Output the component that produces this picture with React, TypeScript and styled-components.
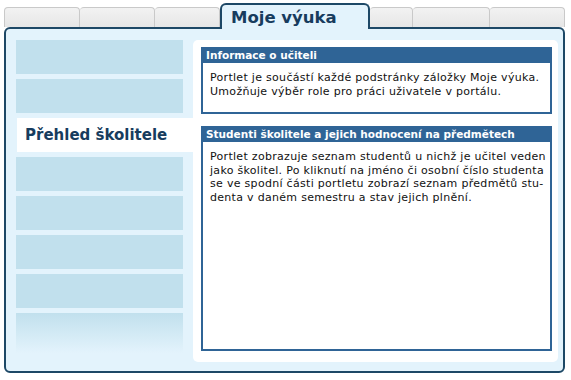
import React from "react";
import styled, { createGlobalStyle } from "styled-components";

const Global = createGlobalStyle`
  html, body { margin: 0; padding: 0; background: #ffffff; }
  body { font-family: "DejaVu Sans", Verdana, sans-serif; }
`;

const Page = styled.div`
  width: 571px;
  height: 380px;
  box-sizing: border-box;
  padding: 3px 6px 0 4px;
  display: flex;
  flex-direction: column;
`;

const TabBar = styled.div`
  display: flex;
  align-items: flex-end;
  height: 24px;
  position: relative;
  z-index: 2;
`;

const Tab = styled.div<{ $w: number }>`
  width: ${(p) => p.$w}px;
  height: 20px;
  box-sizing: border-box;
  background: linear-gradient(#f2f2f2, #e6e6e6);
  border: 1px solid #c9c9c9;
  border-bottom: none;
  border-left-width: 0;
  border-radius: 4px 4px 0 0;
  &:first-child { border-left-width: 1px; }
`;

const ActiveTab = styled.div`
  width: 150px;
  height: 26px;
  margin-bottom: -2px;
  box-sizing: border-box;
  background: #e3f3fc;
  border: 2px solid #1d4866;
  border-bottom: none;
  border-radius: 6px 6px 0 0;
  display: flex;
  align-items: center;
  justify-content: flex-start;
  padding-left: 9px;
  font-weight: bold;
  font-size: 16.5px;
  color: #173c5e;
  padding-top: 1px;
`;

const Panel = styled.div`
  height: 346px;
  box-sizing: border-box;
  border: 2px solid #1d4866;
  border-radius: 6px;
  background: #e3f3fc;
  padding: 11px 10px 9px 10px;
  display: grid;
  grid-template-columns: 177px 1fr;
`;

const Nav = styled.div`
  display: flex;
  flex-direction: column;
  gap: 5px;
`;

const NavItem = styled.div<{ $fade?: boolean }>`
  height: ${(p) => (p.$fade ? 40 : 34)}px;
  margin-right: 10px;
  background: ${(p) =>
    p.$fade ? "linear-gradient(#c1e0ed, #e3f3fc)" : "#c1e0ed"};
`;

const NavActive = styled.div`
  height: 34px;
  margin-left: 1px;
  background: #ffffff;
  display: flex;
  align-items: center;
  padding-left: 8px;
  font-weight: bold;
  font-size: 15px;
  color: #173c5e;
`;

const Content = styled.div`
  background: #ffffff;
  border-radius: 5px;
  padding: 7px 6px 11px 8px;
  display: flex;
  flex-direction: column;
  gap: 12px;
`;

const Portlet = styled.div<{ $grow?: boolean }>`
  display: flex;
  flex-direction: column;
  flex: ${(p) => (p.$grow ? 1 : "none")};
  border: 2px solid #2f6496;
  border-top: none;
`;

const PortletHeader = styled.div`
  background: #2f6496;
  color: #ffffff;
  font-weight: bold;
  font-size: 10.5px;
  height: 16px;
  line-height: 16px;
  margin: 0 -2px;
  padding-left: 5px;
`;

const PortletBody = styled.div`
  flex: 1;
  padding: 8px 4px 14px 7px;
  font-size: 11px;
  letter-spacing: 0.3px;
  line-height: 13.5px;
  color: #111111;
  white-space: nowrap;
`;

export default function App() {
  const leftTabs = [76, 75, 65];
  const rightTabs = [43, 77, 75];
  return (
    <>
      <Global />
      <Page>
        <TabBar>
          {leftTabs.map((w, i) => (
            <Tab key={i} $w={w} />
          ))}
          <ActiveTab>Moje výuka</ActiveTab>
          {rightTabs.map((w, i) => (
            <Tab key={i} $w={w} />
          ))}
        </TabBar>
        <Panel>
          <Nav>
            <NavItem />
            <NavItem />
            <NavActive>Přehled školitele</NavActive>
            <NavItem />
            <NavItem />
            <NavItem />
            <NavItem />
            <NavItem $fade />
          </Nav>
          <Content>
            <Portlet>
              <PortletHeader>Informace o učiteli</PortletHeader>
              <PortletBody>
                Portlet je součástí každé podstránky záložky Moje výuka.
                <br />
                Umožňuje výběr role pro práci uživatele v portálu.
              </PortletBody>
            </Portlet>
            <Portlet $grow>
              <PortletHeader>Studenti školitele a jejich hodnocení na předmětech</PortletHeader>
              <PortletBody>
                Portlet zobrazuje seznam studentů u nichž je učitel veden
                <br />
                jako školitel. Po kliknutí na jméno či osobní číslo studenta
                <br />
                se ve spodní části portletu zobrazí seznam předmětů stu-
                <br />
                denta v daném semestru a stav jejich plnění.
              </PortletBody>
            </Portlet>
          </Content>
        </Panel>
      </Page>
    </>
  );
}
